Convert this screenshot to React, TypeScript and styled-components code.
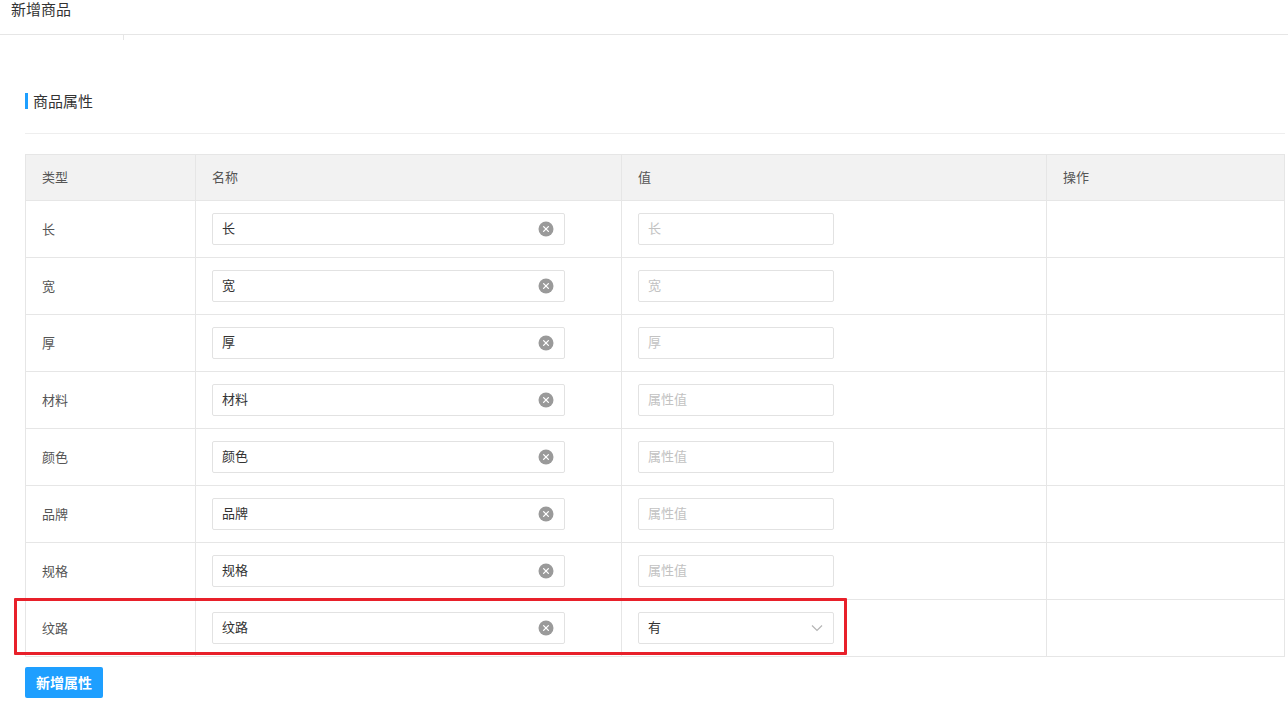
import React from "react";
import styled, { createGlobalStyle } from "styled-components";

const GlobalStyle = createGlobalStyle`
  html, body { margin: 0; padding: 0; background: #fff; }
  body {
    font-family: "Noto Sans CJK SC", "Noto Sans", sans-serif;
    color: #333;
    -webkit-font-smoothing: antialiased;
  }
  * { box-sizing: border-box; }
`;

const Page = styled.div`
  width: 1288px;
  min-height: 727px;
`;

const TopBar = styled.div`
  height: 35px;
  padding-left: 11px;
  font-size: 15px;
  line-height: 18px;
  color: #333;
  border-bottom: 1px solid #e6e6e6;
`;

const TabTick = styled.div`
  width: 1px;
  height: 5px;
  margin-left: 123px;
  background: #e6e6e6;
`;

const Content = styled.div`
  padding: 0 3px 0 25px;
`;

const SectionTitle = styled.div`
  margin-top: 53px;
  height: 16px;
  line-height: 15px;
  border-left: 3px solid #1e9fff;
  padding-left: 5px;
  font-size: 15px;
  color: #333;
`;

const Divider = styled.div`
  margin-top: 24px;
  height: 1px;
  background: #eeeeee;
`;

const TableWrap = styled.div`
  position: relative;
  margin-top: 20px;
  border: 1px solid #e6e6e6;
  border-bottom: none;
`;

const Row = styled.div<{ $head?: boolean }>`
  display: grid;
  grid-template-columns: 169px 426px 425px 1fr;
  height: ${(p) => (p.$head ? "46px" : "57px")};
  background: ${(p) => (p.$head ? "#f2f2f2" : "#fff")};
  border-bottom: 1px solid #e6e6e6;
`;

const Cell = styled.div`
  display: flex;
  align-items: center;
  padding: 0 16px 2px;
  font-size: 13px;
  color: #555;
  & + & {
    border-left: 1px solid #e6e6e6;
  }
`;

const InputBox = styled.div<{ $w: number }>`
  display: flex;
  align-items: center;
  width: ${(p) => p.$w}px;
  height: 32px;
  margin-top: 2px;
  padding: 0 10px 0 9px;
  border: 1px solid #e2e2e2;
  border-radius: 2px;
  background: #fff;
  font-size: 13px;
`;

const InputText = styled.span<{ $ph?: boolean }>`
  flex: 1;
  line-height: 16px;
  padding-bottom: 3px;
  color: ${(p) => (p.$ph ? "#c2c2c2" : "#333")};
`;

const ClearIcon = () => (
  <svg width="16" height="16" viewBox="0 0 16 16">
    <circle cx="8" cy="8" r="7.5" fill="#9a9a9a" />
    <path d="M5.6 5.6 L10.4 10.4 M10.4 5.6 L5.6 10.4" stroke="#fff" strokeWidth="1.3" strokeLinecap="round" />
  </svg>
);

const Chevron = () => (
  <svg width="12" height="8" viewBox="0 0 12 8">
    <polyline points="1,1.5 6,6.5 11,1.5" fill="none" stroke="#b5b5b5" strokeWidth="1.2" />
  </svg>
);

const Highlight = styled.div`
  position: absolute;
  left: -12px;
  top: 443px;
  width: 833px;
  height: 57px;
  border: 3px solid #e8202a;
  border-radius: 1px;
  pointer-events: none;
`;

const AddButton = styled.button`
  margin-top: 10px;
  width: 78px;
  height: 31px;
  border: none;
  border-radius: 2px;
  background: #1e9fff;
  color: #fff;
  font-family: inherit;
  font-size: 14px;
  font-weight: bold;
  padding: 0 0 2px;
  cursor: pointer;
`;

type Item = { type: string; value: string; placeholder: boolean; select?: boolean };

const items: Item[] = [
  { type: "长", value: "长", placeholder: true },
  { type: "宽", value: "宽", placeholder: true },
  { type: "厚", value: "厚", placeholder: true },
  { type: "材料", value: "属性值", placeholder: true },
  { type: "颜色", value: "属性值", placeholder: true },
  { type: "品牌", value: "属性值", placeholder: true },
  { type: "规格", value: "属性值", placeholder: true },
  { type: "纹路", value: "有", placeholder: false, select: true },
];

export default function App() {
  return (
    <Page>
      <GlobalStyle />
      <TopBar>新增商品</TopBar>
      <TabTick />
      <Content>
        <SectionTitle>商品属性</SectionTitle>
        <Divider />
        <TableWrap>
          <Row $head>
            <Cell>类型</Cell>
            <Cell>名称</Cell>
            <Cell>值</Cell>
            <Cell>操作</Cell>
          </Row>
          {items.map((it) => (
            <Row key={it.type}>
              <Cell>{it.type}</Cell>
              <Cell>
                <InputBox $w={353}>
                  <InputText>{it.type}</InputText>
                  <ClearIcon />
                </InputBox>
              </Cell>
              <Cell>
                <InputBox $w={196}>
                  <InputText $ph={it.placeholder}>{it.value}</InputText>
                  {it.select && <Chevron />}
                </InputBox>
              </Cell>
              <Cell />
            </Row>
          ))}
          <Highlight />
        </TableWrap>
        <AddButton>新增属性</AddButton>
      </Content>
    </Page>
  );
}
